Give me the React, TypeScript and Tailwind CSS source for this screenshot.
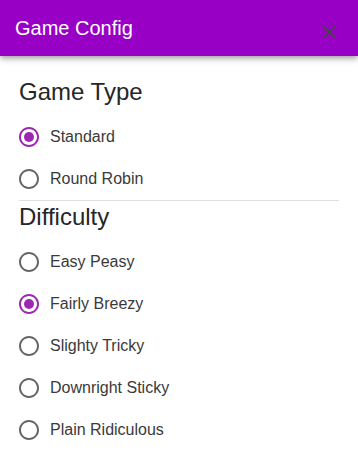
import React from "react"

const gameTypes = ["Standard", "Round Robin"]
const difficulties = ["Easy Peasy", "Fairly Breezy", "Slighty Tricky", "Downright Sticky", "Plain Ridiculous"]

const RadioIcon = ({ checked }: { checked: boolean }) => (
  <svg viewBox="0 0 24 24" className="h-6 w-6" fill={checked ? "#9c27b0" : "#666666"}>
    <path d="M12 2C6.48 2 2 6.48 2 12s4.48 10 10 10 10-4.48 10-10S17.52 2 12 2zm0 18c-4.42 0-8-3.58-8-8s3.58-8 8-8 8 3.58 8 8-3.58 8-8 8z" />
    {checked && <circle cx="12" cy="12" r="5" />}
  </svg>
)

const Option = ({ label, checked }: { label: string; checked: boolean }) => (
  <label className="-ml-[11px] flex items-center cursor-pointer">
    <span className="flex h-[42px] w-[42px] items-center justify-center">
      <RadioIcon checked={checked} />
    </span>
    <span className="text-base leading-6 text-[#3a3a3a]">{label}</span>
  </label>
)

const Group = ({ title, options, selected }: { title: string; options: string[]; selected: string }) => (
  <div>
    <h5 className="text-2xl leading-8 text-[#262626]">{title}</h5>
    <div className="mt-2 flex flex-col">
      {options.map((o) => (
        <Option key={o} label={o} checked={o === selected} />
      ))}
    </div>
  </div>
)

export default function App() {
  return (
    <div className="min-h-screen w-full bg-white font-['Liberation_Sans',Arial,sans-serif]">
      <header className="relative z-10 flex h-14 items-center justify-between bg-[#9900c5] pl-[15px] pr-[17px] shadow-[0_2px_4px_-1px_rgba(0,0,0,0.2),0_4px_5px_0_rgba(0,0,0,0.14),0_1px_10px_0_rgba(0,0,0,0.12)]">
        <h1 className="text-xl leading-8 text-white">Game Config</h1>
        <button className="mt-2 flex h-6 w-6 items-center justify-center" aria-label="close">
          <svg viewBox="0 0 24 24" className="h-[22px] w-[22px]" fill="#444">
            <path d="M19 6.41 17.59 5 12 10.59 6.41 5 5 6.41 10.59 12 5 17.59 6.41 19 12 13.41 17.59 19 19 17.59 13.41 12z" />
          </svg>
        </button>
      </header>
      <main className="px-[19px] pt-5">
        <Group title="Game Type" options={gameTypes} selected="Standard" />
        <hr className="border-t border-[#e0e0e0]" />
        <Group title="Difficulty" options={difficulties} selected="Fairly Breezy" />
      </main>
    </div>
  )
}
